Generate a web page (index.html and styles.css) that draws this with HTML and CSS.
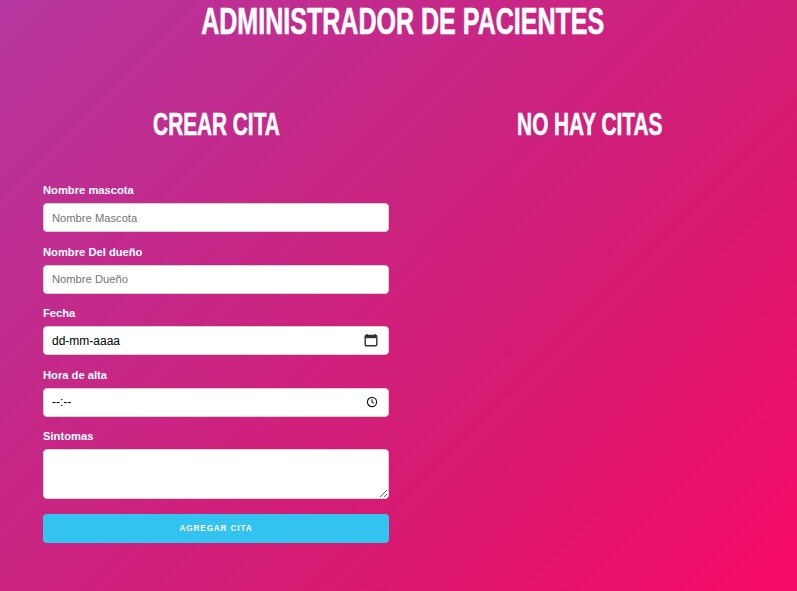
FILE: index.html
```html
<!DOCTYPE html>
<html lang="es">

<head>
    <meta charset="UTF-8">
    <title>Administrador de Pacientes</title>
    <link rel="stylesheet" href="styles.css">
</head>

<body>
    <div class="container">
        <h1><span>Administrador de Pacientes</span></h1>
        <div class="row">
            <div class="column">
                <h2><span>Crear cita</span></h2>
                <form>
                    <label for="mascota">Nombre mascota</label>
                    <input type="text" id="mascota" placeholder="Nombre Mascota">
                    <label for="propietario">Nombre Del dueño</label>
                    <input type="text" id="propietario" placeholder="Nombre Dueño">
                    <label for="fecha">Fecha</label>
                    <div class="field">
                        <input type="text" id="fecha" class="native" value="dd-mm-aaaa">
                        <svg class="icon-date" viewBox="0 0 14 14" width="14" height="14">
                            <path d="M3 1v2M11 1v2" stroke="#333" stroke-width="1.4" fill="none" />
                            <rect x="1.2" y="2.4" width="11.6" height="10.4" rx="1" stroke="#333" stroke-width="1.4" fill="none" />
                            <rect x="1.2" y="2.4" width="11.6" height="2.8" fill="#333" />
                        </svg>
                    </div>
                    <label for="hora">Hora de alta</label>
                    <div class="field">
                        <input type="text" id="hora" class="native" value="--:--">
                        <svg class="icon-time" viewBox="0 0 12 12" width="12" height="12">
                            <circle cx="6" cy="6" r="4.6" stroke="#1a1a1a" stroke-width="1.2" fill="none" />
                            <path d="M6 3.2V6l2 1.4" stroke="#1a1a1a" stroke-width="1.1" fill="none" />
                        </svg>
                    </div>
                    <label for="sintomas">Sintomas</label>
                    <textarea id="sintomas"></textarea>
                    <button type="button">Agregar cita</button>
                </form>
            </div>
            <div class="column">
                <h2><span>No hay citas</span></h2>
            </div>
        </div>
    </div>
</body>

</html>
```

FILE: styles.css
```css
html {
    height: 100%;
}

body {
    margin: 0;
    min-height: 591px;
    overflow: hidden;
    background: linear-gradient(135deg, #b5369f, #d61a72 65%, #f60a66);
    font-family: 'Liberation Sans', Arial, sans-serif;
    color: #fff;
}

.container {
    width: 748px;
    margin-left: 29px;
}

h1,
h2 {
    margin: 0;
    font-family: 'Liberation Sans', sans-serif;
    font-weight: 700;
    text-align: center;
    text-transform: uppercase;
    white-space: nowrap;
    -webkit-text-stroke: 0.6px #fff;
}

/* no condensed display font installed, so squeeze the headings */
h1 span,
h2 span {
    display: inline-block;
}

h1 {
    font-size: 37px;
    line-height: 44px;
}

h1 span {
    transform: scaleX(0.677);
}

h2 {
    font-size: 32px;
    line-height: 34px;
}

h2 span {
    transform: scaleX(0.65);
}

.row {
    display: grid;
    grid-template-columns: 374px 374px;
    margin-top: 63px;
}

form {
    display: flex;
    flex-direction: column;
    padding: 43px 14px 0;
}

label {
    display: block;
    font-size: 11.2px;
    font-weight: 700;
    line-height: 13px;
    margin-bottom: 6px;
}

input {
    display: block;
    box-sizing: border-box;
    width: 100%;
    height: 29px;
    margin-bottom: 13.5px;
    padding: 0 8px;
    border: 1px solid #d1d1d1;
    border-radius: 4px;
    background: #fff;
    font-family: 'Liberation Sans', Arial, sans-serif;
    font-size: 11.2px;
}

.field {
    position: relative;
}

.field svg {
    position: absolute;
    right: 11px;
    top: 7px;
}

.field .icon-time {
    top: 8px;
}

.native {
    color: #000;
    font-size: 12px;
}

textarea {
    display: block;
    box-sizing: border-box;
    width: 100%;
    height: 49.5px;
    margin-bottom: 15.5px;
    border: 1px solid #d1d1d1;
    border-radius: 4px;
    background: #fff;
}

button {
    height: 29px;
    border: none;
    border-radius: 4px;
    background: #33c3f0;
    color: #fff;
    font-family: 'Liberation Sans', Arial, sans-serif;
    font-size: 8.2px;
    font-weight: 700;
    letter-spacing: 0.85px;
    text-transform: uppercase;
}
```
